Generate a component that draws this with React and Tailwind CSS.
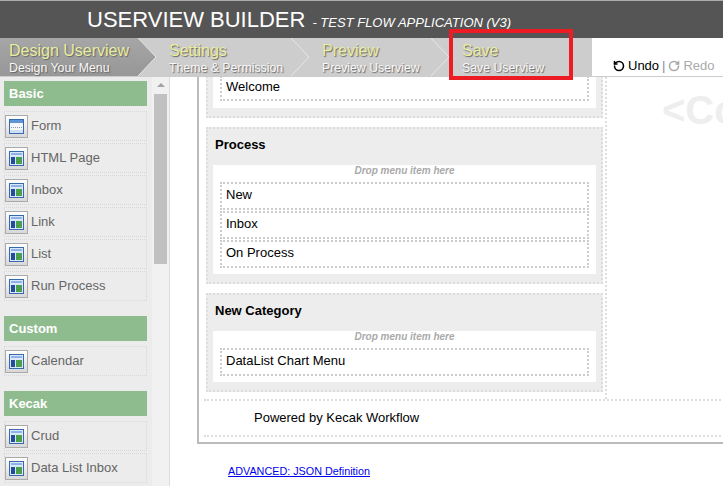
import React from "react";
import { RotateCcw, RotateCw } from "lucide-react";

function WinIcon() {
  return (
    <svg width="15" height="15" viewBox="0 0 15 15" className="block">
      <rect x="0.5" y="0.5" width="14" height="14" fill="#dbe8f8" stroke="#3a68b0" />
      <rect x="2" y="2" width="11" height="2" fill="#8db4e8" />
      <rect x="2" y="6" width="4" height="7" fill="#1f4e9c" />
      <rect x="7" y="6" width="6" height="7" fill="#4da04a" />
    </svg>
  );
}
function FormIcon() {
  return (
    <svg width="15" height="15" viewBox="0 0 15 15" className="block">
      <rect x="0.5" y="0.5" width="14" height="14" fill="#f4f7fb" stroke="#3a68b0" />
      <rect x="1" y="1" width="13" height="3" fill="#5f93d8" />
      <line x1="2" y1="8.5" x2="13" y2="8.5" stroke="#8d99a8" strokeDasharray="1 1" />
      <rect x="1" y="11" width="13" height="3" fill="#cfe0f4" />
    </svg>
  );
}
function Item({ label, form }) {
  return (
    <div className="h-[30px] mb-[2px] border border-dotted border-[#d8d8d8] flex items-center">
      <div className="w-[23px] h-[23px] border border-[#aaaaaa] bg-gradient-to-b from-white to-[#d8d8d8] flex items-center justify-center">
        {form ? <FormIcon /> : <WinIcon />}
      </div>
      <span className="ml-[3px] text-[13px] text-[#666666]">{label}</span>
    </div>
  );
}
function Head({ children }) {
  return (
    <div className="h-[25px] mb-[5px] bg-[#8fbc8f] text-white font-bold text-[13px] leading-[25px] pl-[5px]">{children}</div>
  );
}
function Row({ children, first }) {
  return (
    <div className={`${first ? "" : "mt-px"} h-[28px] mx-[7px] border-2 border-dotted border-[#cccccc] pl-[4px] text-[13px] leading-[22px] text-black`}>
      {children}
    </div>
  );
}
function Drop() {
  return <div className="h-[17px] text-center text-[10px] leading-[12px] font-bold italic text-[#aaaaaa]">Drop menu item here</div>;
}
function Cat({ title, children, className }) {
  return (
    <div className={`border-2 border-dotted border-[#dddddd] bg-[#ededed] ${className}`}>
      <div className="h-[36px] pl-[7px] font-bold text-[13px] leading-[32px] text-black">{title}</div>
      <div className="mx-[5px] bg-white">
        <Drop />
        {children}
        <div className="h-[6px]" />
      </div>
    </div>
  );
}
function Tab({ title, sub, className }) {
  return (
    <div className={`flex flex-col ${className}`}>
      <div className="text-[16px] leading-[20px] mt-[3px] text-[#e8eda0] [text-shadow:1px_1px_1px_#666]">{title}</div>
      <div className="text-[12.3px] leading-[14px] text-[#f8f8f8] [text-shadow:1px_1px_1px_#666]">{sub}</div>
    </div>
  );
}

export default function App() {
  return (
    <div className="relative w-[723px] h-[486px] overflow-hidden bg-white font-['Liberation_Sans',Arial,sans-serif]">
      <div className="h-[38px] bg-[#555555] border-t border-[#aaaaaa] flex items-baseline pl-[87px] pt-[5px] text-white">
        <span className="text-[22px] leading-[28px]">USERVIEW BUILDER</span>
        <span className="text-[13px] italic ml-[7px]">- TEST FLOW APPLICATION (V3)</span>
      </div>

      <div className="flex h-[39px] border-b border-[#cccccc]">
        <div className="relative w-[592px] h-full bg-[#cdcdcd] flex">
          <svg className="absolute left-0 top-0" width="592" height="38" viewBox="0 0 592 38">
            <defs>
              <linearGradient id="act" x1="0" y1="0" x2="0" y2="1">
                <stop offset="0" stopColor="#a6a6a6" />
                <stop offset="1" stopColor="#979797" />
              </linearGradient>
            </defs>
            <polygon points="0,0 138,0 156,19 138,38 0,38" fill="url(#act)" />
            <polyline points="138,0 156,19 138,38" fill="none" stroke="#e4e4e4" strokeWidth="1" />
            <polyline points="291,0 309,19 291,38" fill="none" stroke="#e8e8e8" strokeWidth="1" />
            <polyline points="431,0 449,19 431,38" fill="none" stroke="#e8e8e8" strokeWidth="1" />
          </svg>
          <Tab title="Design Userview" sub="Design Your Menu" className="relative w-[169px] pl-[9px]" />
          <Tab title="Settings" sub="Theme & Permission" className="relative w-[153px]" />
          <Tab title="Preview" sub="Preview Userview" className="relative w-[140px]" />
          <Tab title="Save" sub="Save Userview" className="relative" />
        </div>
        <div className="flex-1 flex items-center pl-[21px] pt-[18px] text-[13px] text-black">
          <RotateCcw size={12} strokeWidth={3.2} className="mr-[3px]" />
          <span>Undo</span>
          <span className="mx-[3px] text-[#888888]">|</span>
          <RotateCw size={12} strokeWidth={3.2} className="mr-[3px] text-[#aaaaaa]" />
          <span className="text-[#aaaaaa]">Redo</span>
        </div>
      </div>

      <div className="flex h-[409px]">
        <div className="w-[170px] shrink-0 flex border-r border-[#dddddd] overflow-hidden">
          <div className="w-[152px] shrink-0 bg-[#ececec] pt-[4px] pl-[4px] pr-[5px]">
            <Head>Basic</Head>
            <Item label="Form" form />
            <Item label="HTML Page" />
            <Item label="Inbox" />
            <Item label="Link" />
            <Item label="List" />
            <Item label="Run Process" />
            <div className="h-[13px]" />
            <Head>Custom</Head>
            <Item label="Calendar" />
            <div className="h-[13px]" />
            <Head>Kecak</Head>
            <Item label="Crud" />
            <Item label="Data List Inbox" />
          </div>
          <div className="w-[17px] bg-[#f1f1f1] flex flex-col items-center pt-[6px]">
            <div className="w-0 h-0 border-x-[4px] border-x-transparent border-b-[4px] border-b-[#a3a3a3]" />
            <div className="w-[13px] h-[170px] mt-[7px] bg-[#c1c1c1]" />
          </div>
        </div>

        <div className="flex-1 min-w-0 overflow-hidden relative">
          <div className="ml-[27px] w-[600px] h-[367px] border-l-2 border-b-2 border-[#bbbbbb] flex flex-col">
            <div className="flex">
              <div className="w-[403px] ml-[5px] pl-[2px] pr-[2px] border-r-2 border-dotted border-[#dddddd] h-[322px] shrink-0">
                <div className="h-[41px] overflow-hidden flex flex-col justify-end">
                  <div className="border-2 border-t-0 border-dotted border-[#dddddd] bg-[#ededed] pb-[8px]">
                    <div className="mx-[5px] bg-white pb-[7px]">
                      <div className="h-[25px] mx-[7px] border-2 border-t-0 border-dotted border-[#cccccc] pl-[4px] text-[13px] leading-[21px]">Welcome</div>
                    </div>
                  </div>
                </div>
                <Cat title="Process" className="mt-[9px] h-[157px]">
                  <Row first>New</Row>
                  <Row>Inbox</Row>
                  <Row>On Process</Row>
                </Cat>
                <Cat title="New Category" className="mt-[9px] h-[99px]">
                  <Row first>DataList Chart Menu</Row>
                </Cat>
              </div>
              <div className="pl-[55px] pt-[10px] text-[40px] leading-[46px] font-bold text-[#eeeeee] whitespace-nowrap">&lt;Co</div>
            </div>
            <div className="ml-[5px] h-[38px] border-y-2 border-dotted border-[#dddddd] pl-[50px] text-[13px] leading-[34px] text-black">
              Powered by Kecak Workflow
            </div>
          </div>
          <a href="#" className="block ml-[58px] mt-[20px] text-[10.8px] leading-[14px] text-[#0000ee] underline">ADVANCED: JSON Definition</a>
        </div>
      </div>

      <div className="absolute left-[449px] top-[29px] w-[124px] h-[51px] border-4 border-[#ed1c24] pointer-events-none" />
    </div>
  );
}
